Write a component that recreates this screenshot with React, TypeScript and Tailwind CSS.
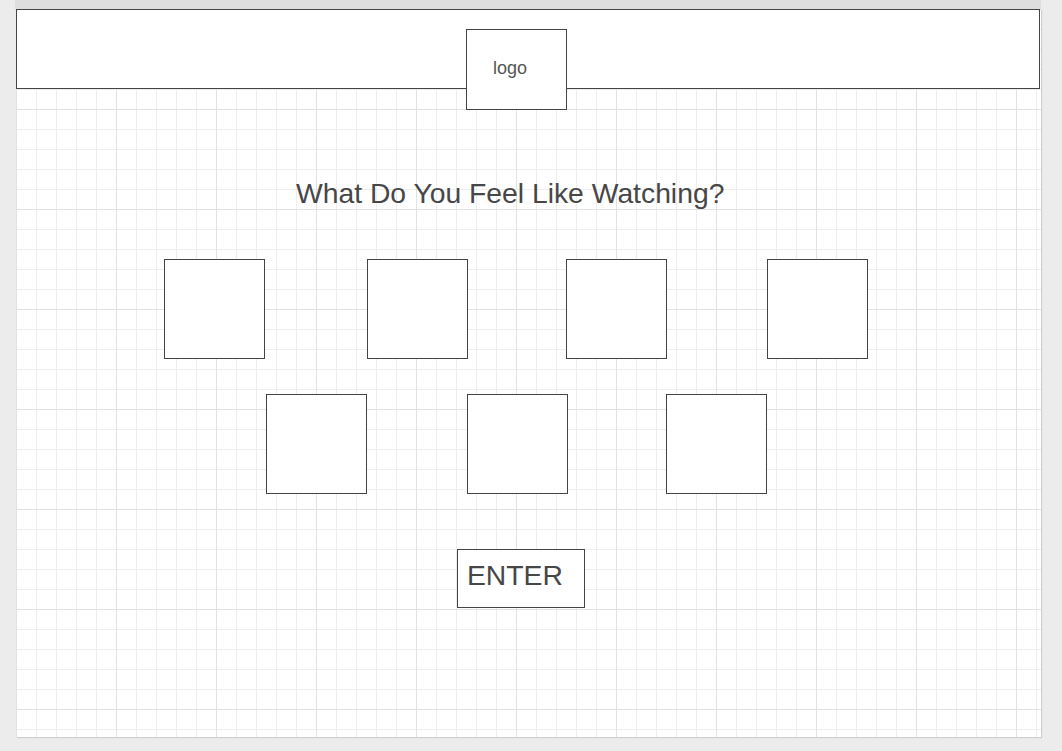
import React from "react";

const Box = ({ ml }: { ml: string }) => (
  <div className={`${ml} w-[101px] h-[100px] shrink-0 border border-[#444] bg-white`} />
);

export default function App() {
  return (
    <div className="w-[1062px] h-[751px] bg-[#ececec] overflow-hidden font-['Liberation_Sans',Arial,sans-serif]">
      <div className="ml-[15px] w-[1026px] h-[9px] bg-[#dedede]" />
      <div className="ml-[16px] w-[1025px] h-[728px] bg-white shadow-[1px_1px_1px_rgba(0,0,0,0.12)] bg-[linear-gradient(to_right,#e2e2e2_1px,transparent_1px),linear-gradient(to_bottom,#e2e2e2_1px,transparent_1px),linear-gradient(to_right,#eeeeee_1px,transparent_1px),linear-gradient(to_bottom,#eeeeee_1px,transparent_1px)] bg-[size:100px_100px,100px_100px,20px_20px,20px_20px]">
        <header className="h-[80px] w-[1024px] border border-[#444] bg-white">
          <div className="ml-[449px] mt-[19px] w-[101px] h-[81px] border border-[#444] bg-white flex items-center pl-[26px] pb-[2px] text-[18px] text-[#555]">
            logo
          </div>
        </header>
        <h1 className="mt-[88px] pl-[280px] text-[28.3px] leading-[32px] text-[#474747] whitespace-nowrap">
          What Do You Feel Like Watching?
        </h1>
        <div className="mt-[50px] flex">
          <Box ml="ml-[148px]" />
          <Box ml="ml-[102px]" />
          <Box ml="ml-[98px]" />
          <Box ml="ml-[100px]" />
        </div>
        <div className="mt-[35px] flex">
          <Box ml="ml-[250px]" />
          <Box ml="ml-[100px]" />
          <Box ml="ml-[98px]" />
        </div>
        <div className="mt-[55px] ml-[441px] w-[128px] h-[59px] border border-[#444] bg-white pl-[9px] pt-[9px] text-[28.3px] leading-[32px] text-[#474747]">
          ENTER
        </div>
      </div>
    </div>
  );
}
